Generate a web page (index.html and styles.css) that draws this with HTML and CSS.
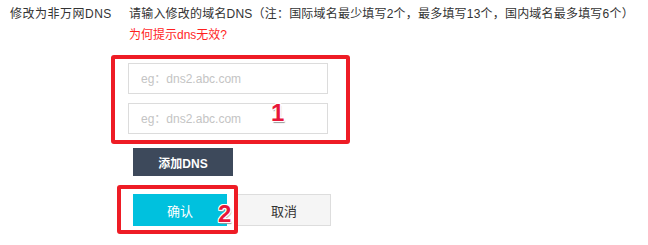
FILE: index.html
```html
<!DOCTYPE html>
<html lang="zh-CN">
<head>
  <meta charset="UTF-8">
  <title>修改DNS</title>
  <link rel="stylesheet" href="styles.css">
</head>
<body>
  <div class="form-row">
    <div class="form-label">修改为非万网DNS</div>
    <div class="form-body">
      <div class="tip">请输入修改的域名DNS（注：国际域名最少填写2个，最多填写13个，国内域名最多填写6个）</div>
      <a class="help-link" href="#">为何提示dns无效?</a>

      <div class="dns-list">
        <input class="dns-input" type="text" placeholder="eg：dns2.abc.com">
        <input class="dns-input" type="text" placeholder="eg：dns2.abc.com">
      </div>

      <button class="btn btn-add">添加DNS</button>

      <div class="actions">
        <button class="btn btn-ok">确认</button>
        <button class="btn btn-cancel">取消</button>
      </div>
    </div>
  </div>

  <!-- annotation marks -->
  <div class="mark-box box-1"></div>
  <div class="mark-box box-2"></div>
  <span class="mark-num num-1">1</span>
  <span class="mark-num num-2">2</span>
</body>
</html>
```

FILE: styles.css
```css
body {
  margin: 0;
  background-color: #fff;
  font-family: "Liberation Sans", "Noto Sans CJK SC", sans-serif;
  font-size: 12px;
  color: #333;
  position: relative;
  width: 648px;
  height: 245px;
  overflow: hidden;
}

.form-row {
  display: flex;
  padding: 4px 0 0 10px;
}

.form-label {
  width: 119px;
  line-height: 21px;
  letter-spacing: 0.5px;
}

.form-body {
  display: flex;
  flex-direction: column;
  align-items: flex-start;
}

.tip {
  line-height: 21px;
  letter-spacing: 0.2px;
}

.help-link {
  line-height: 21px;
  color: #ff1f1f;
  text-decoration: none;
}

.dns-list {
  display: flex;
  flex-direction: column;
  gap: 9px;
  margin: 17px 0 0 -1px;
}

.dns-input {
  box-sizing: border-box;
  width: 200px;
  height: 31px;
  margin: 0;
  padding: 0 12px;
  border: 1px solid #dcdcdc;
  font-family: inherit;
  font-size: 12px;
  outline: none;
}

.dns-input::placeholder {
  color: #c4c4c4;
}

.btn {
  border: none;
  margin: 0;
  font-family: inherit;
  cursor: pointer;
}

.btn-add {
  margin: 14px 0 0 4px;
  width: 100px;
  height: 28px;
  background-color: #3d495b;
  color: #fff;
  font-size: 12px;
  font-weight: bold;
}

.actions {
  display: flex;
  gap: 10px;
  margin: 18px 0 0 4px;
}

.btn-ok {
  width: 94px;
  height: 32px;
  background-color: #00c1de;
  color: #fff;
  font-size: 13px;
}

.btn-cancel {
  box-sizing: border-box;
  width: 94px;
  height: 32px;
  background-color: #f5f5f5;
  border: 1px solid #dddddd;
  color: #333;
  font-size: 13px;
}

/* red annotation overlay */
.mark-box {
  position: absolute;
  box-sizing: border-box;
  border: 4px solid #ee1c25;
  border-radius: 3px;
}

.box-1 {
  left: 111px;
  top: 55px;
  width: 239px;
  height: 89px;
}

.box-2 {
  left: 117px;
  top: 185px;
  width: 121px;
  height: 49px;
}

.mark-num {
  position: absolute;
  font-family: "Liberation Sans", sans-serif;
  font-weight: bold;
  color: #e8173a;
  line-height: 1;
  text-shadow:
    -1px -1px 0 #fff, 1px -1px 0 #fff, -1px 1px 0 #fff, 1px 1px 0 #fff,
    0 -1px 0 #fff, 0 1px 0 #fff, -1px 0 0 #fff, 1px 0 0 #fff,
    1px 2px 1px #999;
}

.num-1 {
  left: 271px;
  top: 101px;
  font-size: 24px;
}

.num-2 {
  left: 218px;
  top: 202px;
  font-size: 24px;
}
```
